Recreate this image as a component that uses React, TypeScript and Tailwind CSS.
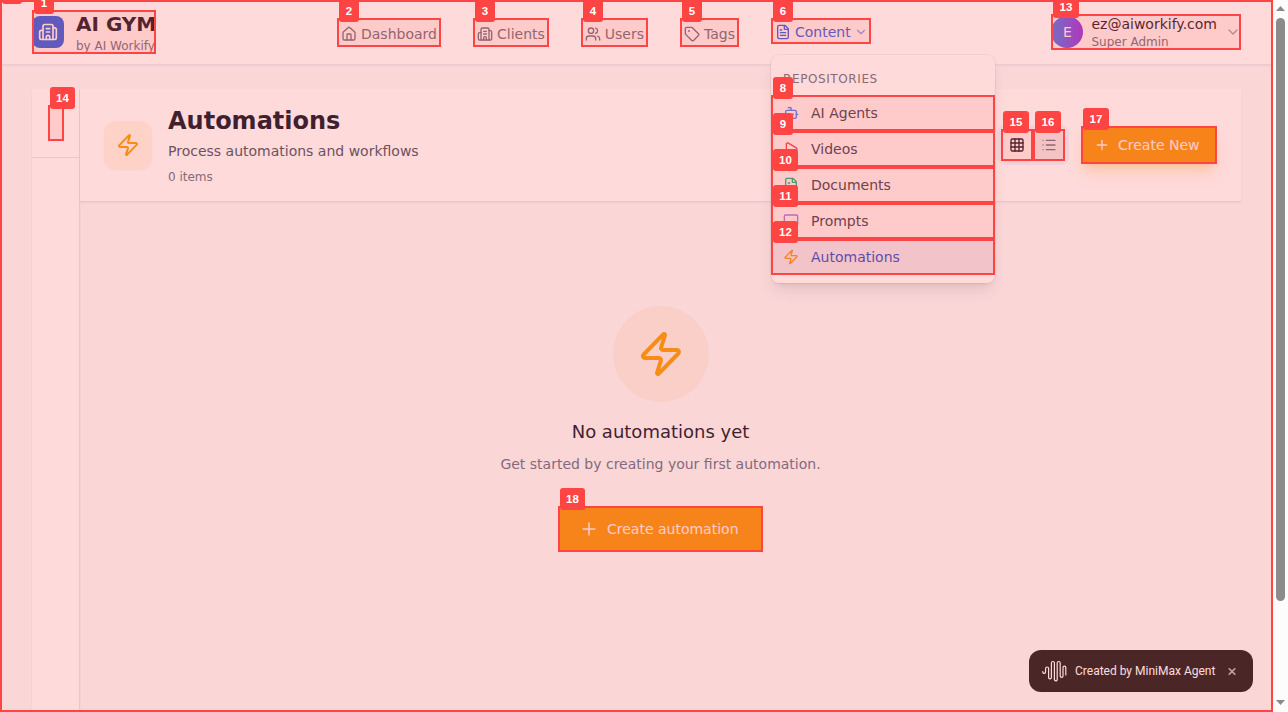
import React from "react";
import {
  Bot, Building2, ChevronDown, FileText, Grid3x3, House, List, MessageSquare, Play, Plus, Tag, Users, Zap,
} from "lucide-react";

type Mark = { n: number; x: number; y: number; w: number; h: number };

const marks: Mark[] = [
  { n: 1, x: 32, y: 10, w: 124, h: 44 },
  { n: 2, x: 337, y: 18, w: 104, h: 29 },
  { n: 3, x: 473, y: 18, w: 76, h: 29 },
  { n: 4, x: 581, y: 18, w: 67, h: 29 },
  { n: 5, x: 680, y: 18, w: 59, h: 29 },
  { n: 6, x: 771, y: 18, w: 100, h: 26 },
  { n: 8, x: 771, y: 95, w: 224, h: 36 },
  { n: 9, x: 771, y: 131, w: 224, h: 36 },
  { n: 10, x: 771, y: 167, w: 224, h: 36 },
  { n: 11, x: 771, y: 203, w: 224, h: 36 },
  { n: 12, x: 771, y: 239, w: 224, h: 36 },
  { n: 13, x: 1051, y: 14, w: 190, h: 36 },
  { n: 14, x: 48, y: 105, w: 16, h: 36 },
  { n: 15, x: 1001, y: 129, w: 32, h: 32 },
  { n: 16, x: 1033, y: 129, w: 32, h: 32 },
  { n: 17, x: 1081, y: 126, w: 136, h: 38 },
  { n: 18, x: 558, y: 506, w: 205, h: 46 },
];

function MarkTag({ n, x, y }: { n: number; x: number; y: number }) {
  const width = n < 10 ? "w-5" : x > 1000 ? "w-[26px]" : "w-[25px]";
  return (
    <div
      className={`absolute flex h-[22px] items-center justify-center rounded-[3px] bg-[#ff4444] pt-[1.5px] font-['Liberation_Sans',sans-serif] text-[11.5px] font-bold leading-none tracking-[0.2px] text-white ${width}`}
      style={{ left: x + 2, top: y - 18 }}
    >
      {n}
    </div>
  );
}

function Marks() {
  return (
    <div className="pointer-events-none absolute inset-0 z-50 overflow-hidden">
      <div className="absolute inset-y-0 left-0 w-[1273px] border-2 border-[#ff4444] bg-[#ff4444]/20" />
      <MarkTag n={0} x={0} y={0} />
      {marks.map((m) => (
        <React.Fragment key={m.n}>
          <div
            className="absolute border-2 border-[#ff4444] bg-[#ff4444]/10"
            style={{ left: m.x, top: m.y, width: m.w, height: m.h }}
          />
          <MarkTag n={m.n} x={m.x} y={m.y} />
        </React.Fragment>
      ))}
    </div>
  );
}

const navItems = [
  { label: "Dashboard", Icon: House },
  { label: "Clients", Icon: Building2 },
  { label: "Users", Icon: Users },
  { label: "Tags", Icon: Tag },
];

const repositories = [
  { label: "AI Agents", Icon: Bot, color: "text-[#3b82f6]" },
  { label: "Videos", Icon: Play, color: "text-[#ef4444]" },
  { label: "Documents", Icon: FileText, color: "text-[#10b981]" },
  { label: "Prompts", Icon: MessageSquare, color: "text-[#a878e8]" },
];

function Header() {
  return (
    <header className="relative z-10 flex h-[65px] items-center border-b border-[#e8ebf0] bg-white pl-8 pr-8 shadow-xs">
      <div className="flex w-[305px] items-center gap-3">
        <div className="flex size-8 items-center justify-center rounded-lg bg-[#2563eb]">
          <Building2 className="size-5 text-white" />
        </div>
        <div>
          <div className="text-xl font-bold leading-7 text-[#111827]">AI GYM</div>
          <div className="text-xs leading-4 text-[#6b7280]">by AI Workify</div>
        </div>
      </div>
      <nav className="flex gap-8 text-sm text-[#6b7280]">
        {navItems.map(({ label, Icon }) => (
          <div key={label} className="flex h-[29px] items-center gap-1 px-1 pt-1">
            <Icon className="size-4" />
            <span>{label}</span>
          </div>
        ))}
        <div className="relative h-[26px]">
          <div className="flex h-[26px] items-center gap-1 pl-1 pt-0.5 text-[#2563eb]">
            <FileText className="size-4" />
            <span>Content</span>
            <ChevronDown className="-ml-px size-3.5 opacity-60" />
          </div>
          <div className="absolute left-0 top-[37px] w-56 rounded-lg bg-white pb-2 pt-2 shadow-lg ring-1 ring-black/5">
            <div className="px-3 py-2 text-xs uppercase leading-4 tracking-[0.6px] text-[#6b7280]">Repositories</div>
            {repositories.map(({ label, Icon, color }) => (
              <div key={label} className="flex h-9 items-center gap-3 px-3 text-[#374151]">
                <Icon className={`size-4 ${color}`} />
                {label}
              </div>
            ))}
            <div className="flex h-9 items-center gap-3 bg-[#eff6ff] px-3 text-[#1d4ed8]">
              <Zap className="size-4 text-[#f59e0b]" />
              Automations
            </div>
          </div>
        </div>
      </nav>
      <div className="ml-auto flex h-9 items-center">
        <div className="flex size-8 items-center justify-center rounded-full bg-linear-to-r/srgb from-[#3b82f6] to-[#9333ea] text-sm text-white">E</div>
        <div className="ml-2">
          <div className="text-sm leading-5 text-[#111827]">ez@aiworkify.com</div>
          <div className="text-xs leading-4 text-[#6b7280]">Super Admin</div>
        </div>
        <ChevronDown className="ml-2 size-4 text-[#9ca3af]" />
      </div>
    </header>
  );
}

function Toast() {
  return (
    <div className="absolute bottom-5 left-[1029px] flex h-[42px] w-56 items-center rounded-xl bg-[#1f1f1f] pl-[13px] font-['Roboto',sans-serif] text-[12px] text-white">
      <svg width="25" height="22" viewBox="0 0 25 22" fill="none" stroke="currentColor" strokeWidth="1.2" strokeLinecap="round">
        <path d="M.8 11.5v.5a1.4 1.4 0 0 0 2.8 0V8.5a1.5 1.5 0 0 1 3 0v9a1.4 1.4 0 0 0 2.8 0V3a1.5 1.5 0 0 1 3 0v16.5a1.4 1.4 0 0 0 2.8 0V3a1.5 1.5 0 0 1 3 0v13a1.4 1.4 0 0 0 2.8 0V7.5a1.4 1.4 0 0 1 2.8 0V15" />
      </svg>
      <span className="ml-2 pt-px">Created by MiniMax Agent</span>
      <span className="ml-3 text-[17px] leading-none text-white/70">×</span>
    </div>
  );
}

export default function App() {
  return (
    <div className="relative flex h-[712px] w-[1288px] overflow-hidden bg-white font-['DejaVu_Sans',sans-serif] text-sm">
      <div className="flex w-[1273px] flex-col bg-[#f9fafc]">
        <Header />
        <main className="mx-8 mt-6 flex flex-1">
          <aside className="w-12 border-r border-[#e5e7eb] bg-white shadow-xs">
            <div className="h-[69px] border-b border-[#e5e7eb]" />
          </aside>
          <section className="flex flex-1 flex-col">
            <div className="flex h-[113px] items-center border-b border-[#e5e7eb] bg-white px-6 shadow-xs">
              <div className="flex size-12 items-center justify-center rounded-xl bg-[#f59e0b]/10 shadow-xs">
                <Zap className="size-6 text-[#f59e0b]" />
              </div>
              <div className="ml-4">
                <h1 className="text-2xl font-bold leading-8 text-[#0f172a]">Automations</h1>
                <p className="mt-1 text-sm leading-5 text-[#475569]">Process automations and workflows</p>
                <p className="mt-2 text-xs leading-4 text-[#64748b]">0 items</p>
              </div>
              <div className="ml-auto flex items-center gap-3">
                <div className="flex rounded-lg bg-[#f1f5f9] p-1">
                  <div className="flex size-8 items-center justify-center rounded-md bg-white text-[#0f172a] shadow-xs"><Grid3x3 className="size-4" /></div>
                  <div className="flex size-8 items-center justify-center text-[#64748b]"><List className="size-4" /></div>
                </div>
                <button className="flex h-[38px] w-[136px] items-center gap-2 bg-[#f59e0b] pl-[13px] text-white shadow-lg shadow-[#f59e0b]/25">
                  <Plus className="size-4" />Create New
                </button>
              </div>
            </div>
            <div className="flex flex-col items-center pt-[104px]">
              <div className="flex size-24 items-center justify-center rounded-full bg-[#f59e0b]/[0.08]">
                <Zap className="size-12 text-[#f59e0b]" />
              </div>
              <h2 className="mt-4 text-lg leading-7 text-[#0f172a]">No automations yet</h2>
              <p className="mt-2 text-sm leading-5 text-[#64748b]">Get started by creating your first automation.</p>
              <button className="mt-8 flex h-[46px] w-[205px] items-center gap-2 bg-[#f59e0b] pl-[21px] text-white">
                <Plus className="size-5" />Create automation
              </button>
            </div>
          </section>
        </main>
      </div>
      <div className="flex w-[15px] flex-col items-center justify-between bg-[#fcfcfc] pb-[7px] pt-[6px]">
        <div className="h-[5px] w-[9px] bg-[#8b8b8b] [clip-path:polygon(50%_0,100%_100%,0_100%)]" />
        <div className="mb-auto mt-[7px] h-[583px] w-[9px] rounded-full bg-[#8b8b8b]" />
        <div className="h-[5px] w-[9px] bg-[#8b8b8b] [clip-path:polygon(0_0,100%_0,50%_100%)]" />
      </div>
      <Toast />
      <Marks />
    </div>
  );
}
